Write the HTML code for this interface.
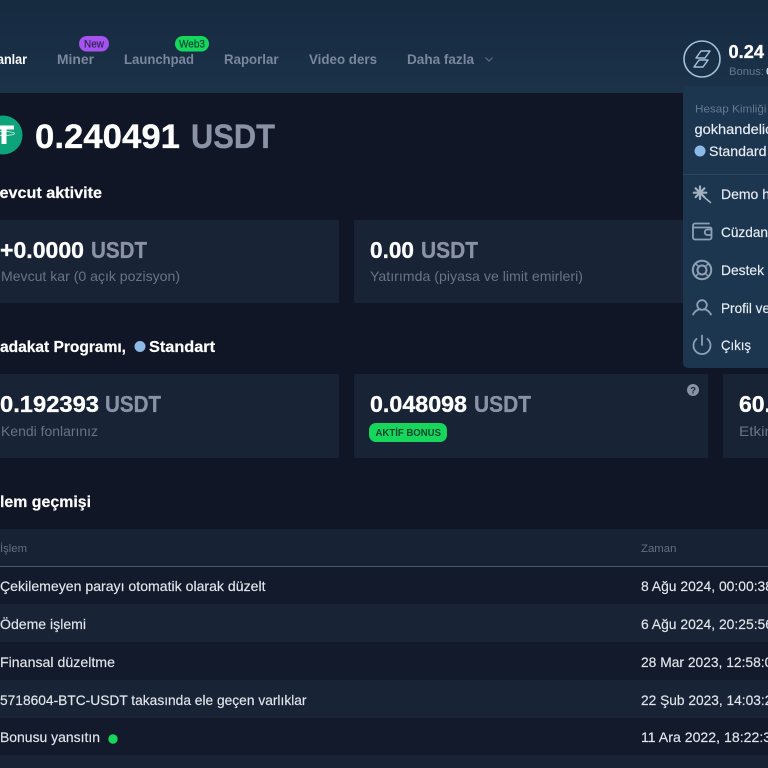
<!DOCTYPE html>
<html lang="tr"><head><meta charset="utf-8"><title>Hesap</title>
<style>
html,body{margin:0;padding:0;width:768px;height:768px;overflow:hidden;background:#101626}
svg{display:block;position:absolute;left:0;top:0}
text{font-family:"Liberation Sans",sans-serif;white-space:pre}
.b{font-weight:700}
.nav{font-size:14px;font-weight:700;fill:#7b879c}
.w{fill:#fff}
.g{fill:#8a92a6}
.sw{stroke:#fff;stroke-width:.3}
.sg{stroke:#8a92a6;stroke-width:.3}
.big{font-size:23px;font-weight:700}
.lab{font-size:14px;fill:#687487}
.h{font-size:16px;font-weight:700;fill:#fff;stroke:#fff;stroke-width:.2}
.row{font-size:14px;fill:#e2e6ec;stroke:#e2e6ec;stroke-width:.15}
.th{font-size:11px;fill:#647082}
.m{font-size:14px;fill:#e8edf3;stroke:#e8edf3;stroke-width:.15}
.ic{fill:none;stroke:#8ea0b3;stroke-width:1.8;stroke-linecap:round;stroke-linejoin:round}
</style></head><body>
<svg width="768" height="768" viewBox="0 0 768 768" xmlns="http://www.w3.org/2000/svg">
<defs><linearGradient id="hd" x1="0" y1="0" x2="0" y2="1"><stop offset="0" stop-color="#162a40"/><stop offset="1" stop-color="#1b3249"/></linearGradient></defs>
<rect width="768" height="768" fill="#101626"/>
<rect width="768" height="93" fill="url(#hd)"/>

<text class="nav w" x="-3" y="64" textLength="30" lengthAdjust="spacingAndGlyphs">anlar</text>
<text class="nav" x="57" y="64" textLength="37" lengthAdjust="spacingAndGlyphs">Miner</text>
<text class="nav" x="124" y="64" textLength="70" lengthAdjust="spacingAndGlyphs">Launchpad</text>
<text class="nav" x="224" y="64" textLength="54.500" lengthAdjust="spacingAndGlyphs">Raporlar</text>
<text class="nav" x="309" y="64" textLength="68" lengthAdjust="spacingAndGlyphs">Video ders</text>
<text class="nav" x="407" y="64" textLength="67" lengthAdjust="spacingAndGlyphs">Daha fazla</text>
<path d="M485.500 57.500l3.500 3.500 3.500-3.500" fill="none" stroke="#5f6d82" stroke-width="1.200"/>
<rect x="79" y="36" width="30" height="15.500" rx="7.700" fill="#a552ee"/>
<text x="84" y="47.500" font-size="11" fill="#33235c" stroke="#33235c" stroke-width=".2" textLength="20" lengthAdjust="spacingAndGlyphs">New</text>
<rect x="175" y="36" width="34" height="15.500" rx="7.700" fill="#17d65c"/>
<text x="179" y="47.500" font-size="11" fill="#0e4a37" stroke="#0e4a37" stroke-width=".2" textLength="26" lengthAdjust="spacingAndGlyphs">Web3</text>

<circle cx="702" cy="59" r="18" fill="none" stroke="#a3c0da" stroke-width="1.600"/>
<path d="M701 51H710L705 58H696ZM699 60H708L703 67H694Z" fill="none" stroke="#a3c0da" stroke-width="1.500" stroke-linejoin="round"/>
<text class="b w sw" x="728.500" y="58" font-size="18" textLength="35.500" lengthAdjust="spacingAndGlyphs">0.24</text>
<text class="b" x="767" y="58" font-size="18" fill="#8a92a6">U</text>
<text x="729" y="75" font-size="11" fill="#647a90" textLength="35" lengthAdjust="spacingAndGlyphs">Bonus:</text>
<text class="b" fill="#cfd6de" x="766" y="75" font-size="11">0</text>

<circle cx="3" cy="135" r="19.500" fill="#0ea47b"/>
<path d="M-6 125.500h20v4h-7.500v14.500h-5v-14.500h-7.500z" fill="#fff"/>
<ellipse cx="4" cy="133.500" rx="10.500" ry="2" fill="none" stroke="#fff" stroke-width=".8" opacity=".85"/>
<text class="b w sw" x="35" y="148" font-size="34" textLength="145" lengthAdjust="spacingAndGlyphs">0.240491</text>
<text class="b g sg" x="191" y="148" font-size="34" textLength="84" lengthAdjust="spacingAndGlyphs">USDT</text>
<text class="h" x="-14" y="198" textLength="116" lengthAdjust="spacingAndGlyphs">Mevcut aktivite</text>

<rect x="-20" y="220" width="359" height="83" rx="2" fill="#182335"/>
<rect x="354" y="220" width="354" height="83" rx="2" fill="#182335"/>
<rect x="723" y="220" width="60" height="83" rx="2" fill="#182335"/>
<text class="big w sw" x="0" y="258" textLength="84" lengthAdjust="spacingAndGlyphs">+0.0000</text>
<text class="big g sg" x="91" y="258" textLength="56" lengthAdjust="spacingAndGlyphs">USDT</text>
<text class="lab" x="1" y="281" textLength="179" lengthAdjust="spacingAndGlyphs">Mevcut kar (0 açık pozisyon)</text>
<text class="big w sw" x="370" y="258" textLength="44" lengthAdjust="spacingAndGlyphs">0.00</text>
<text class="big g sg" x="421" y="258" textLength="57" lengthAdjust="spacingAndGlyphs">USDT</text>
<text class="lab" x="370" y="281" textLength="213" lengthAdjust="spacingAndGlyphs">Yatırımda (piyasa ve limit emirleri)</text>

<text class="h" x="0" y="352" textLength="126" lengthAdjust="spacingAndGlyphs">adakat Programı,</text>
<circle cx="140" cy="346.500" r="5.500" fill="#8db9e6"/>
<text class="h" x="149" y="352" textLength="66" lengthAdjust="spacingAndGlyphs">Standart</text>

<rect x="-20" y="374" width="359" height="84" rx="2" fill="#182335"/>
<rect x="354" y="374" width="354" height="84" rx="2" fill="#182335"/>
<rect x="723" y="374" width="60" height="84" rx="2" fill="#182335"/>
<text class="big w sw" x="0" y="412" textLength="99" lengthAdjust="spacingAndGlyphs">0.192393</text>
<text class="big g sg" x="105" y="412" textLength="56" lengthAdjust="spacingAndGlyphs">USDT</text>
<text class="lab" x="1" y="436" textLength="97" lengthAdjust="spacingAndGlyphs">Kendi fonlarınız</text>
<text class="big w sw" x="370" y="412" textLength="97" lengthAdjust="spacingAndGlyphs">0.048098</text>
<text class="big g sg" x="474" y="412" textLength="57" lengthAdjust="spacingAndGlyphs">USDT</text>
<rect x="369" y="423" width="78" height="19" rx="7" fill="#17d65c"/>
<text class="b" x="375.500" y="436" font-size="10" fill="#0c4630" textLength="65.500" lengthAdjust="spacingAndGlyphs">AKTİF BONUS</text>
<circle cx="693" cy="390" r="6" fill="#8a92a6"/>
<text class="b" x="690.300" y="393.500" font-size="9.500" fill="#182335">?</text>
<text class="big w sw" x="739" y="412" textLength="32" lengthAdjust="spacingAndGlyphs">60.</text>
<text class="lab" x="739" y="436" textLength="34" lengthAdjust="spacingAndGlyphs">Etkin</text>

<text class="h" x="0" y="507" textLength="91" lengthAdjust="spacingAndGlyphs">lem geçmişi</text>

<rect y="529" width="768" height="37" fill="#172234"/>
<rect y="566" width="768" height="1" fill="#4c596b"/>
<rect y="567" width="768" height="37" fill="#121a2b"/>
<rect y="604" width="768" height="38" fill="#182335"/>
<rect y="642" width="768" height="38" fill="#121a2b"/>
<rect y="680" width="768" height="38" fill="#182335"/>
<rect y="718" width="768" height="37" fill="#121a2b"/>
<rect y="755" width="768" height="13" fill="#182335"/>
<text class="th" x="0" y="552" textLength="27" lengthAdjust="spacingAndGlyphs">İşlem</text>
<text class="th" x="641" y="552" textLength="35.500" lengthAdjust="spacingAndGlyphs">Zaman</text>
<text class="row" x="0" y="591" textLength="265.500" lengthAdjust="spacingAndGlyphs">Çekilemeyen parayı otomatik olarak düzelt</text>
<text class="row" x="0" y="629" textLength="86" lengthAdjust="spacingAndGlyphs">Ödeme işlemi</text>
<text class="row" x="0" y="667" textLength="115" lengthAdjust="spacingAndGlyphs">Finansal düzeltme</text>
<text class="row" x="0" y="705" textLength="306.500" lengthAdjust="spacingAndGlyphs">5718604-BTC-USDT takasında ele geçen varlıklar</text>
<text class="row" x="0" y="742" textLength="100" lengthAdjust="spacingAndGlyphs">Bonusu yansıtın</text>
<circle cx="113" cy="739" r="4.700" fill="#17d65c"/>
<text class="row" x="641" y="591" textLength="132" lengthAdjust="spacingAndGlyphs">8 Ağu 2024, 00:00:38</text>
<text class="row" x="641" y="629" textLength="132" lengthAdjust="spacingAndGlyphs">6 Ağu 2024, 20:25:56</text>
<text class="row" x="641" y="667" textLength="139" lengthAdjust="spacingAndGlyphs">28 Mar 2023, 12:58:04</text>
<text class="row" x="641" y="705" textLength="139" lengthAdjust="spacingAndGlyphs">22 Şub 2023, 14:03:21</text>
<text class="row" x="641" y="742" textLength="138" lengthAdjust="spacingAndGlyphs">11 Ara 2022, 18:22:35</text>

<rect x="683" y="86" width="100" height="282" rx="5" fill="#1c3650"/>
<text x="695" y="112.500" font-size="11" fill="#647a90" textLength="78" lengthAdjust="spacingAndGlyphs">Hesap Kimliği :</text>
<text class="m" x="694.500" y="134" textLength="78" lengthAdjust="spacingAndGlyphs">gokhandelic</text>
<circle cx="700" cy="151" r="5.500" fill="#8db9e6"/>
<text class="m" x="709" y="156" textLength="57.500" lengthAdjust="spacingAndGlyphs">Standard</text>
<rect x="683" y="174" width="85" height="1" fill="#2c4560"/>
<text class="m" x="721" y="199" textLength="49" lengthAdjust="spacingAndGlyphs">Demo h</text>
<text class="m" x="721" y="237" textLength="47" lengthAdjust="spacingAndGlyphs">Cüzdan</text>
<text class="m" x="721" y="275" textLength="43" lengthAdjust="spacingAndGlyphs">Destek</text>
<text class="m" x="721" y="313" textLength="49" lengthAdjust="spacingAndGlyphs">Profil ve</text>
<text class="m" x="721" y="350" textLength="30" lengthAdjust="spacingAndGlyphs">Çıkış</text>

<path class="ic" style="stroke:#a2b1c0;stroke-width:2.200" d="M700 186.500v12.500M693.800 192.700h12.500M695.600 188.300l8.800 8.800M704.400 188.300l-8.800 8.800"/>
<path class="ic" style="stroke:#a2b1c0;stroke-width:1.500" d="M704.500 197.500l6 5"/>
<path class="ic" d="M709 223.500h-14a2 2 0 0 0-2 2v12a2 2 0 0 0 2 2h14.500a2 2 0 0 0 2-2v-8.500a1.500 1.500 0 0 0-1.500-1.500h-17M711.500 229.500h-4a2.300 2.300 0 0 0 0 5.500h4"/>
<circle class="ic" style="stroke-width:2" cx="702" cy="270" r="9.200"/><circle class="ic" style="stroke-width:2" cx="702" cy="270" r="4.500"/>
<path class="ic" style="stroke-width:1.500" d="M695.500 263.500l3.300 3.300M708.500 263.500l-3.300 3.300M695.500 276.500l3.300-3.300M708.500 276.500l-3.300-3.300"/>
<circle class="ic" cx="702" cy="305" r="4.800"/>
<path class="ic" d="M693 314.500c2-3.500 4.500-5 7-5.300M711 314.500c-2-3.500-4.500-5-7-5.300"/>
<path class="ic" d="M702 335.500v9.500M696.500 339a8.500 8.500 0 1 0 11 0"/>
</svg>
</body></html>
